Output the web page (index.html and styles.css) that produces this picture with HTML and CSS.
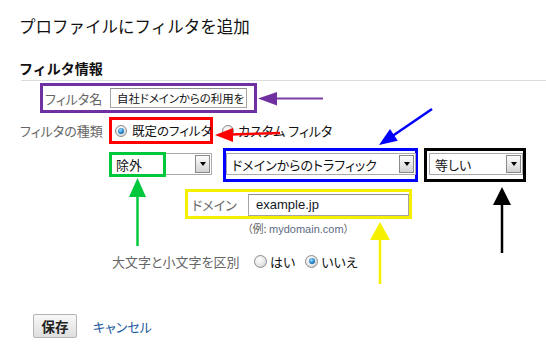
FILE: index.html
```html
<!DOCTYPE html>
<html lang="ja">
<head>
<meta charset="utf-8">
<title>プロファイルにフィルタを追加</title>
<link rel="stylesheet" href="styles.css">
</head>
<body>
<div class="page">
  <h1 class="title">プロファイルにフィルタを追加</h1>
  <h2 class="section">フィルタ情報</h2>
  <div class="rule"></div>

  <div class="row-name">
    <div class="box box-purple name-box">
      <span class="label name-label">フィルタ名</span>
      <div class="input name-input">自社ドメインからの利用を</div>
    </div>
  </div>

  <div class="row-type">
    <span class="label type-label">フィルタの種類</span>
    <div class="box box-red type-box">
      <span class="radio on"></span>
      <span class="opt">既定のフィルタ</span>
    </div>
    <span class="radio custom-radio"></span>
    <span class="opt">カスタム フィルタ</span>
  </div>

  <div class="row-selects">
    <div class="select-wrap">
      <div class="select sel-exclude">
        <span class="sel-text">除外</span>
        <span class="ddbtn"><span class="tri"></span></span>
      </div>
      <div class="box-green"></div>
    </div>
    <div class="box box-blue sel-box-blue">
      <div class="select sel-traffic">
        <span class="sel-text">ドメインからのトラフィック</span>
        <span class="ddbtn"><span class="tri"></span></span>
      </div>
    </div>
    <div class="box box-black sel-box-black">
      <div class="select sel-equal">
        <span class="sel-text">等しい</span>
        <span class="ddbtn"><span class="tri"></span></span>
      </div>
    </div>
  </div>

  <div class="row-domain">
    <div class="box box-yellow domain-box">
      <span class="label domain-label">ドメイン</span>
      <div class="input domain-input">example.jp</div>
    </div>
  </div>
  <div class="hint">（例: <span class="hint-domain">mydomain.com</span>）</div>

  <div class="row-case">
    <span class="label case-label">大文字と小文字を区別</span>
    <span class="radio"></span>
    <span class="opt case-yes">はい</span>
    <span class="radio on case-no-radio"></span>
    <span class="opt">いいえ</span>
  </div>

  <div class="row-actions">
    <span class="btn-save">保存</span>
    <a class="link-cancel" href="#">キャンセル</a>
  </div>

  <svg class="arrows" width="546" height="347" viewBox="0 0 546 347">
    <line x1="323" y1="98.5" x2="274" y2="98.5" stroke="#7b3fa6" stroke-width="2"/>
    <polygon points="258,98.5 277,92 277,105.5" fill="#7030a0"/>
    <line x1="280" y1="133" x2="230" y2="134.5" stroke="#ff0000" stroke-width="2.5"/>
    <polygon points="215,135 233,128 233,142" fill="#ff0000"/>
    <line x1="432" y1="109" x2="391" y2="137" stroke="#0000ff" stroke-width="2.5"/>
    <polygon points="379,145 397.8,140.7 390,129.1" fill="#0000ff"/>
    <line x1="137.5" y1="195" x2="137.5" y2="246" stroke="#00c83c" stroke-width="2.5"/>
    <polygon points="137.5,178 129,197 146,197" fill="#00c83c"/>
    <line x1="502" y1="203" x2="502" y2="253" stroke="#000" stroke-width="2.5"/>
    <polygon points="502,187 493,205 511,205" fill="#000"/>
    <line x1="380" y1="238" x2="380" y2="284" stroke="#f5f000" stroke-width="2.5"/>
    <polygon points="380,222 370,240 390,240" fill="#f5f000"/>
  </svg>
</div>
</body>
</html>
```

FILE: styles.css
```css
html, body {
  margin: 0;
  padding: 0;
  background: #ffffff;
}

.page {
  position: relative;
  width: 546px;
  height: 347px;
  overflow: hidden;
  font-family: "Noto Sans CJK JP", sans-serif;
  font-feature-settings: "palt";
  font-size: 13px;
  color: #222;
}

.title {
  margin: 16px 0 0 19px;
  height: 20px;
  font-size: 16.5px;
  line-height: 20px;
  font-weight: normal;
  font-feature-settings: normal;
  color: #111;
}

.section {
  margin: 24px 0 0 19px;
  height: 16px;
  font-size: 14px;
  line-height: 16px;
  font-weight: bold;
  font-feature-settings: normal;
  color: #111;
}

.rule {
  margin: 4px 0 0 21px;
  height: 1px;
  background: #dcdcdc;
}

.box {
  box-sizing: border-box;
  border-width: 3px;
  border-style: solid;
}

.box-purple { border-color: #7030a0; }
.box-red { border-color: #ff0000; }
.box-blue { border-color: #0000ff; }
.box-black { border-color: #000000; }
.box-yellow { border-color: #f5f000; }

.label {
  color: #666;
  white-space: nowrap;
}

.input {
  box-sizing: border-box;
  border: 1px solid #a5a5a5;
  border-top-color: #8e8e8e;
  background: #fff;
  white-space: nowrap;
  overflow: hidden;
  color: #111;
}

/* row 1 */
.row-name {
  margin: 2px 0 0 40px;
  display: flex;
}

.name-box {
  width: 217px;
  height: 30px;
  display: flex;
  align-items: center;
}

.name-label {
  box-sizing: border-box;
  width: 67px;
  padding-left: 2px;
}

.name-input {
  width: 137px;
  height: 20px;
  line-height: 18px;
  padding-left: 6px;
  font-size: 11.4px;
}

/* row 2 */
.row-type {
  margin: 4px 0 0 20px;
  height: 27px;
  display: flex;
  align-items: center;
}

.type-label {
  width: 89px;
}

.type-box {
  width: 104px;
  height: 27px;
  display: flex;
  align-items: center;
  padding-left: 3px;
  white-space: nowrap;
}

.type-box .opt {
  margin-left: 5px;
  font-size: 12.5px;
}

.opt {
  color: #111;
  white-space: nowrap;
}

.custom-radio {
  margin: 0 4px 0 9px;
}

.radio {
  flex: none;
  position: relative;
  display: inline-block;
  box-sizing: border-box;
  width: 12px;
  height: 12px;
  border-radius: 50%;
  border: 1px solid #8c8c8c;
  background: radial-gradient(circle at 40% 35%, #ffffff 0%, #e6e6e6 55%, #c4c4c4 100%);
}

.radio.on::after {
  content: "";
  position: absolute;
  left: 2px;
  top: 2px;
  width: 6px;
  height: 6px;
  border-radius: 50%;
  background: radial-gradient(circle at 40% 35%, #9fe0ff 0%, #2a8ad0 50%, #0b3f78 100%);
}

/* row 3 */
.row-selects {
  margin: 4px 0 0 110px;
  height: 34px;
  display: flex;
  align-items: flex-start;
}

.select-wrap {
  position: relative;
  margin-top: 5px;
}

.select {
  box-sizing: border-box;
  height: 22px;
  border: 1px solid #a9a9a9;
  background: #fff;
  display: flex;
  align-items: center;
  justify-content: space-between;
  padding: 0 1px 0 5px;
  color: #111;
  white-space: nowrap;
}

.sel-exclude { width: 102px; }

.box-green {
  position: absolute;
  left: -1px;
  top: -1px;
  width: 57px;
  height: 25px;
  box-sizing: border-box;
  border: 3px solid #00c83c;
}

.sel-box-blue {
  margin-left: 11px;
  width: 195px;
  height: 34px;
  padding: 2px 1px 0 0;
}

.sel-traffic { width: 190px; }

.sel-box-black {
  margin-left: 6px;
  width: 102px;
  height: 34px;
  padding: 2px 0 0 2px;
}

.sel-equal { width: 94px; }

.ddbtn {
  flex: none;
  box-sizing: border-box;
  width: 15px;
  height: 18px;
  border: 1px solid #8a8a8a;
  background: linear-gradient(#fdfdfd, #d2d2d2);
  display: flex;
  align-items: center;
  justify-content: center;
}

.tri {
  width: 0;
  height: 0;
  border-left: 3.5px solid transparent;
  border-right: 3.5px solid transparent;
  border-top: 4px solid #000;
}

/* row 4 */
.row-domain {
  margin: 7px 0 0 185px;
  display: flex;
}

.domain-box {
  width: 227px;
  height: 30px;
  display: flex;
  align-items: flex-end;
}

.domain-label {
  box-sizing: border-box;
  width: 60px;
  padding-left: 4px;
  align-self: center;
}

.domain-input {
  width: 161px;
  height: 22px;
  line-height: 20px;
  padding-left: 7px;
  font-family: "Liberation Sans", "Noto Sans CJK JP", sans-serif;
  font-size: 13px;
  color: #101828;
}

.hint {
  margin: 3px 0 0 247px;
  height: 12px;
  font-size: 11px;
  line-height: 12px;
  color: #666;
  white-space: nowrap;
}

.hint-domain {
  font-family: "Liberation Sans", sans-serif;
  color: #5d6a85;
}

/* row 5 */
.row-case {
  margin: 19px 0 0 112px;
  height: 16px;
  display: flex;
  align-items: center;
}

.case-label {
  width: 142px;
}

.row-case .radio {
  width: 13px;
  height: 13px;
}

.row-case .radio.on::after {
  left: 2.5px;
  top: 2.5px;
}

.case-yes {
  margin-left: 2px;
}

.row-case .opt {
  margin-left: 3px;
}

.case-no-radio {
  margin-left: 10px;
}

/* actions */
.row-actions {
  margin: 45px 0 0 33px;
  display: flex;
  align-items: center;
}

.btn-save {
  box-sizing: border-box;
  width: 44px;
  height: 24px;
  border: 1px solid #b4b4b4;
  border-radius: 2px;
  background: linear-gradient(#f8f8f8, #dedede);
  display: flex;
  align-items: center;
  justify-content: center;
  font-weight: bold;
  font-size: 13.5px;
  color: #222;
}

.link-cancel {
  margin-left: 16px;
  color: #1a5a9e;
  text-decoration: none;
}

.arrows {
  position: absolute;
  left: 0;
  top: 0;
  pointer-events: none;
}
```
